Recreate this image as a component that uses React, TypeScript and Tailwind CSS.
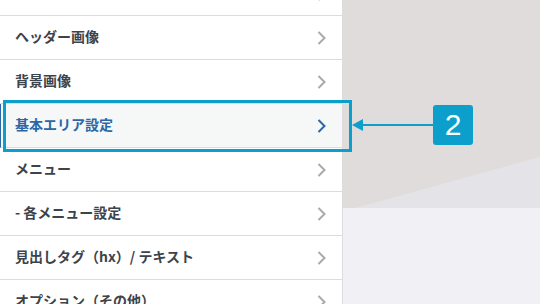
import type { ReactNode } from "react";

type Section = {
  id: string;
  title: string;
  active?: boolean;
};

// Customizer panel sections; the first one is scrolled mostly out of view.
const sections: Section[] = [
  { id: "site", title: "" },
  { id: "header", title: "ヘッダー画像" },
  { id: "background", title: "背景画像" },
  { id: "base-area", title: "基本エリア設定", active: true },
  { id: "menu", title: "メニュー" },
  { id: "menu-each", title: "- 各メニュー設定" },
  { id: "headings", title: "見出しタグ（hx）/ テキスト" },
  { id: "options", title: "オプション（その他）" },
];

function Chevron({ active }: { active?: boolean }) {
  return (
    <svg width="10" height="14" viewBox="0 0 10 14" fill="none" aria-hidden="true">
      <polyline
        points="1.5,1 7.5,7 1.5,13"
        stroke={active ? "#2a67a8" : "#a7aaad"}
        strokeWidth="2"
      />
    </svg>
  );
}

function SectionRow({ section }: { section: Section }) {
  return (
    <li
      className={
        section.active
          ? "flex h-[44px] items-center justify-between border-b border-[#dcdcde] border-l border-l-[#2a67a8] bg-[#f6f7f7] pl-[14px] pr-[15px] text-[#2a67a8]"
          : "flex h-[44px] items-center justify-between border-b border-[#dcdcde] bg-white pl-[15px] pr-[15px] text-[#3c434a]"
      }
    >
      <span className="mb-[3px] text-[14px] font-semibold leading-none">{section.title}</span>
      <Chevron active={section.active} />
    </li>
  );
}

function Callout({ children }: { children: ReactNode }) {
  return (
    <div className="flex h-[40px] w-[40px] items-center justify-center rounded-[3px] bg-[#0d9fcb] text-[30px] leading-none text-white [font-family:'Liberation_Sans',Arial,sans-serif]">
      {children}
    </div>
  );
}

export default function App() {
  return (
    <div className="relative flex h-[304px] w-[540px] overflow-hidden bg-white [font-family:'Noto_Sans_CJK_JP','Noto_Sans',sans-serif]">
      {/* Customizer sidebar */}
      <aside className="w-[343px] shrink-0 border-r border-[#dcdcde] bg-white">
        <ul className="-mt-[28px]">
          {sections.map((section) => (
            <SectionRow key={section.id} section={section} />
          ))}
        </ul>
      </aside>

      {/* Site preview */}
      <main className="flex flex-1 flex-col">
        <div className="h-[208px] bg-[#dfdcdb]">
          <svg width="197" height="208" viewBox="0 0 197 208" className="block" aria-hidden="true">
            <polygon points="12,208 197,157 197,208" fill="#e4e3e8" />
          </svg>
        </div>
        <div className="flex-1 bg-[#f1f0f5]" />
      </main>

      {/* Highlight box around the active section */}
      <div className="pointer-events-none absolute left-[3px] top-[100px] h-[52px] w-[349px] border-[3px] border-[#0d9fcb]" />

      {/* Arrow + numbered callout */}
      <div className="pointer-events-none absolute left-[352px] top-[105px] flex items-center">
        <svg width="81" height="40" viewBox="0 0 81 40" aria-hidden="true">
          <polygon points="0,20 11,14 11,26" fill="#0d9fcb" />
          <rect x="10" y="19" width="71" height="2" fill="#0d9fcb" />
        </svg>
        <Callout>2</Callout>
      </div>
    </div>
  );
}
